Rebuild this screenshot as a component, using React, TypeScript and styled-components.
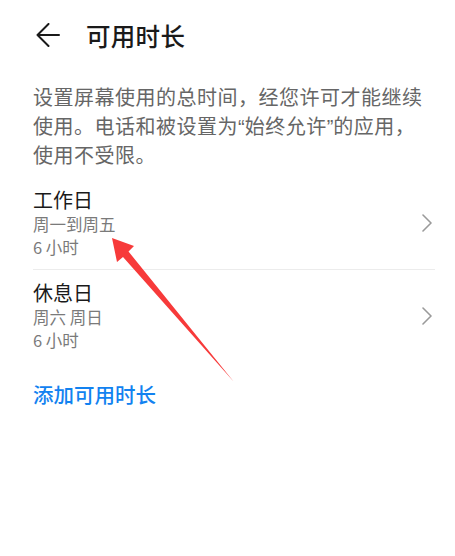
import React from "react";
import styled, { createGlobalStyle } from "styled-components";

const GlobalStyle = createGlobalStyle`
  html, body {
    margin: 0;
    padding: 0;
    background: #ffffff;
  }
  body {
    font-family: "Noto Sans CJK SC", "Noto Sans", sans-serif;
  }
`;

interface IPeriod {
  title: string;
  days: string;
  hours: string;
}

const periods: IPeriod[] = [
  { title: "工作日", days: "周一到周五", hours: "6 小时" },
  { title: "休息日", days: "周六 周日", hours: "6 小时" },
];

const BackIcon = () => (
  <svg width="24" height="24" viewBox="0 0 24 24" fill="none">
    <path
      d="M23 12H1.5M12.5 1L1.5 12l11 11"
      stroke="#1a1a1a"
      strokeWidth="2"
      strokeLinecap="round"
      strokeLinejoin="round"
    />
  </svg>
);

const Chevron = () => (
  <svg width="10" height="18" viewBox="0 0 10 18" fill="none">
    <path
      d="M1 1l8 8-8 8"
      stroke="#9a9a9a"
      strokeWidth="1.6"
      strokeLinecap="round"
      strokeLinejoin="round"
    />
  </svg>
);

export default function App() {
  return (
    <Page>
      <GlobalStyle />
      <Header>
        <BackButton>
          <BackIcon />
        </BackButton>
        <Title>可用时长</Title>
      </Header>
      <Content>
        <Description>
          设置屏幕使用的总时间，经您许可才能继续
          <br />
          使用。电话和被设置为<Quote>“</Quote>始终允许<Quote>”</Quote>的应用，
          <br />
          使用不受限。
        </Description>
        <List>
          {periods.map((p, idx) => (
            <Row key={p.title} last={idx === periods.length - 1}>
              <RowText>
                <RowTitle>{p.title}</RowTitle>
                <RowSub>{p.days}</RowSub>
                <RowSub>{p.hours}</RowSub>
              </RowText>
              <Chevron />
            </Row>
          ))}
        </List>
        <AddLink>添加可用时长</AddLink>
      </Content>
      <Annotation width="455" height="556" viewBox="0 0 455 556">
        <path
          d="M112 238 L134 246 L128.5 251.5 L234 382 L123 257 L117 262 Z"
          fill="#f73a3a"
        />
      </Annotation>
    </Page>
  );
}

const Page = styled.div`
  position: relative;
  width: 455px;
  height: 556px;
  overflow: hidden;
  background: #ffffff;
`;

const Header = styled.div`
  display: flex;
  align-items: center;
  height: 70px;
  padding-left: 36px;
`;

const BackButton = styled.div`
  display: flex;
  align-items: center;
  width: 24px;
  height: 24px;
  margin-right: 26px;
`;

const Title = styled.h1`
  margin: 0;
  font-size: 24.5px;
  font-weight: 500;
  color: #1a1a1a;
  letter-spacing: 0.3px;
`;

const Content = styled.div`
  padding: 13px 20px 0 33px;
`;

const Description = styled.p`
  margin: 0;
  font-size: 20px;
  line-height: 28.5px;
  color: #666666;
  letter-spacing: 0.5px;
  white-space: nowrap;
`;

const Quote = styled.span`
  font-family: "Liberation Sans", sans-serif;
  letter-spacing: 0;
`;

const List = styled.div`
  margin-top: 7px;
`;

const Row = styled.div<{ last?: boolean }>`
  display: flex;
  align-items: center;
  justify-content: space-between;
  padding: 10px 3px 10px 0;
  border-bottom: ${(p) => (p.last ? "none" : "1px solid #ececec")};
`;

const RowText = styled.div`
  display: flex;
  flex-direction: column;
`;

const RowTitle = styled.div`
  font-size: 20px;
  line-height: 26px;
  color: #1a1a1a;
`;

const RowSub = styled.div`
  font-size: 16.5px;
  line-height: 23px;
  color: #7a7a7a;
`;

const AddLink = styled.div`
  margin-top: 17px;
  font-size: 20.5px;
  font-weight: 500;
  color: #1282f0;
`;

const Annotation = styled.svg`
  position: absolute;
  left: 0;
  top: 0;
  pointer-events: none;
`;
